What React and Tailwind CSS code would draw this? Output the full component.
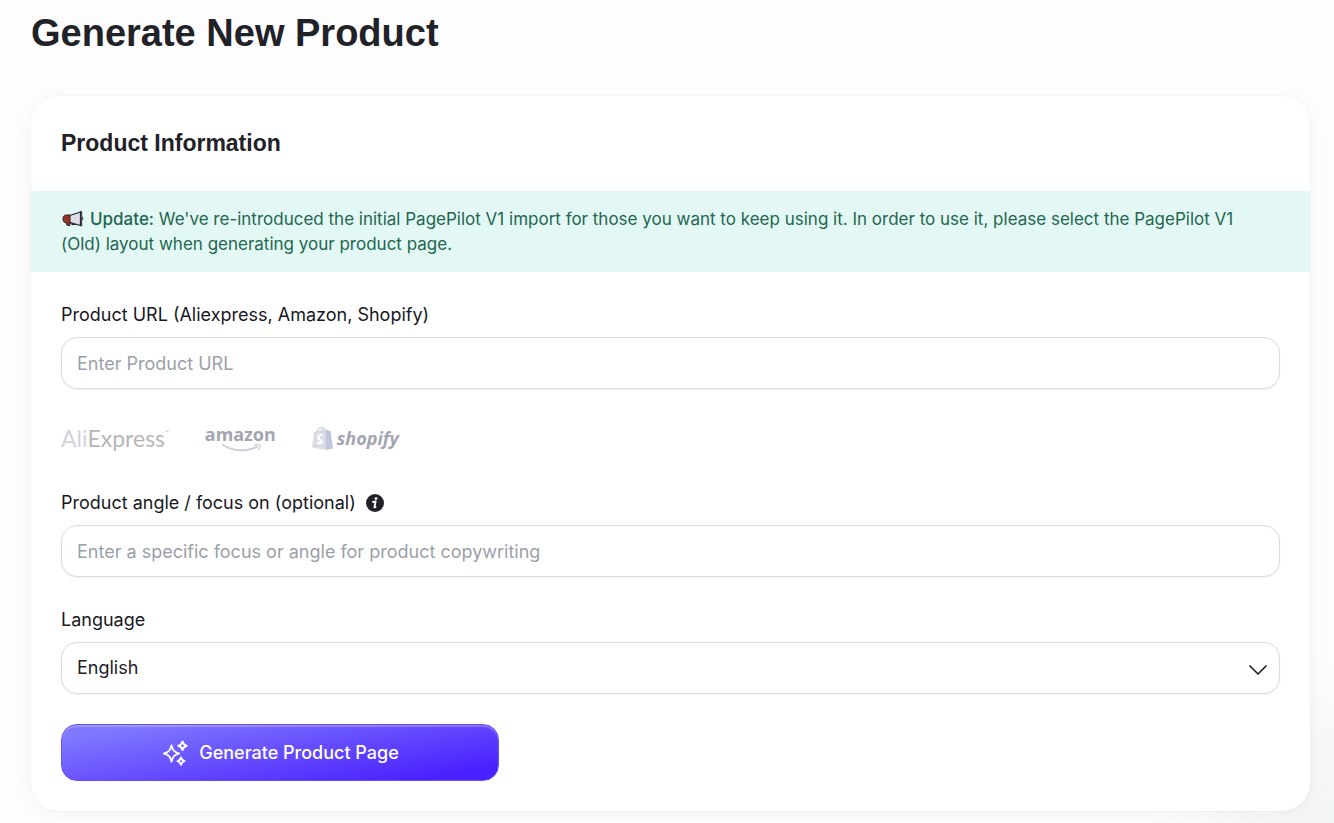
import { useState } from "react";

const fieldClass =
  "block w-full h-[52px] rounded-2xl border border-[#dadbdf] bg-white px-[15px] text-[18px] leading-6 text-[#212128] placeholder:text-[#9b9fa8] outline-none shadow-[0_1px_2px_rgba(0,0,0,0.06)] focus:border-[#6a5cff]";

const labelClass = "block text-[18px] leading-6 text-[#18181f]";

function MegaphoneIcon() {
  return (
    <svg width="23" height="18" viewBox="0 0 23 18" className="inline-block align-[-3px] mr-1.5" aria-hidden="true">
      <path d="M9.500 12.500c.5 2.600 4.500 2.800 5.500.5" fill="none" stroke="#28232d" strokeWidth="1.200" />
      <path d="M8.500 5.500 19.500 2v13.500L8.500 12.300Z" fill="#dcdde6" stroke="#28232d" strokeWidth="1.200" strokeLinejoin="round" />
      <path d="M5 5h4v7.500H8.300l.7 3H6.200L5 12.800c-2.200 0-3-1.800-3-3.900S2.800 5 5 5Z" fill="#8f3325" stroke="#3a2428" strokeWidth="1" strokeLinejoin="round" />
      <path d="M19.500 1.500h1.200v5.200c1.500.4 1.500 3.400 0 3.800V16h-1.200Z" fill="#514c5b" stroke="#28232d" strokeWidth=".8" />
    </svg>
  );
}

function InfoIcon() {
  return (
    <svg width="18" height="18" viewBox="0 0 18 18" aria-hidden="true">
      <circle cx="9" cy="9" r="9" fill="#212128" />
      <circle cx="10" cy="4.600" r="1.400" fill="#fff" />
      <path d="M7 8 9.700 7.400 8.400 13c-.1.700.5.600 1.200-.1" fill="none" stroke="#fff" strokeWidth="1.800" strokeLinecap="round" strokeLinejoin="round" />
    </svg>
  );
}

function SparklesIcon() {
  return (
    <svg width="28" height="28" viewBox="0 0 28 28" fill="none" stroke="#fff" strokeWidth="2" strokeLinejoin="round" aria-hidden="true">
      <path d="M10.500 6.500c1 4.800 2.700 6.700 7.500 8-4.800 1.300-6.500 3.200-7.500 8-1-4.800-2.700-6.700-7.500-8 4.800-1.300 6.500-3.200 7.500-8Z" />
      <path d="M21.500 2.500c.6 2.500 1.600 3.600 4.200 4.300-2.600.7-3.600 1.800-4.200 4.300-.6-2.500-1.600-3.600-4.200-4.300 2.600-.7 3.600-1.800 4.200-4.300Z" />
      <path d="M20 18.500c.5 2.100 1.300 3 3.500 3.600-2.200.6-3 1.500-3.500 3.600-.5-2.100-1.300-3-3.500-3.600 2.200-.6 3-1.500 3.500-3.600Z" />
    </svg>
  );
}

function AliExpressLogo() {
  return (
    <span className="flex items-start font-['Lato',sans-serif] text-[23px] leading-7 text-[#b8b5ba]">
      <span className="text-[#d3d3dc]">Ali</span>Express
      <span className="text-[5px] leading-4">™</span>
    </span>
  );
}

function AmazonLogo() {
  return (
    <span className="flex flex-col items-center">
      <span className="font-['Noto_Sans',sans-serif] text-[18px] leading-5 font-bold text-[#a3a5b1]">amazon</span>
      <svg width="44" height="8" viewBox="0 0 44 8" fill="none" stroke="#ccd0dc" aria-hidden="true">
        <path d="M5 1C15 7.500 29 8 39 2.500" strokeWidth="2" strokeLinecap="round" />
        <path d="M36.500 1c3-.8 5-.8 5.500 0 .4 1-.3 3-1.800 4.500" strokeWidth="1.300" strokeLinecap="round" />
      </svg>
    </span>
  );
}

function ShopifyLogo() {
  return (
    <span className="flex items-center gap-1">
      <svg width="21" height="24" viewBox="0 0 21 24" aria-hidden="true">
        <path d="M2 6 14 3.500V24L0 21.500Z" fill="#d9dce4" />
        <path d="M14 3.500 18.500 5 21 22.500 14 24Z" fill="#bfc5dc" />
        <path d="M5 6.500C5.500 3 8 .8 9.800 1c1.700.2 2.400 2.300 2.400 4.500M8.500 5.500C9 2.500 11.500.8 13 3.500" fill="none" stroke="#d0d4de" strokeWidth="1.200" />
        <path d="M11 9.500C8.500 8.500 6 9.200 6 11.300c0 2.300 3.700 2.200 3.700 4.400 0 2-2.600 2-4.700.6" fill="none" stroke="#fff" strokeWidth="2.200" />
      </svg>
      <span className="font-['Open_Sans',sans-serif] text-[18px] leading-6 font-bold italic text-[#a3a5b1]">shopify</span>
    </span>
  );
}

export default function App() {
  const [url, setUrl] = useState("");
  const [angle, setAngle] = useState("");
  const [language, setLanguage] = useState("English");

  return (
    <main className="min-h-screen bg-[#fdfdfd] bg-[radial-gradient(circle_at_bottom_right,#f1f5f3_0,#fdfdfd_180px)] pl-[31px] pr-6 pt-2.5 pb-3 font-['Inter',sans-serif] text-[#212128]">
      <h1 className="font-['Liberation_Sans',sans-serif] text-[38px] leading-[46px] font-bold">Generate New Product</h1>

      <section className="mt-10 overflow-hidden rounded-[28px] bg-white shadow-[0_0_0_1px_rgba(0,0,0,0.02),0_3px_20px_rgba(0,0,0,0.04)]">
        <h2 className="px-[30px] pt-8 pb-[33px] font-['Liberation_Sans',sans-serif] text-[23px] leading-[30px] font-bold">
          Product Information
        </h2>

        <div className="bg-[#e3f8f4] pl-[30px] pr-10 pt-4 pb-[15px] text-[17px] leading-[25px] text-[#226650]">
          <p>
            <MegaphoneIcon />
            <strong className="font-medium">Update:</strong> We've re-introduced the initial PagePilot V1 import for
            those you want to keep using it. In order to use it, please select the PagePilot V1 (Old) layout when
            generating your product page.
          </p>
        </div>

        <form className="px-[30px] pt-[31px] pb-[30px]" onSubmit={(e) => e.preventDefault()}>
          <div className="flex flex-col gap-2.5">
            <label htmlFor="product-url" className={labelClass}>
              Product URL (Aliexpress, Amazon, Shopify)
            </label>
            <input
              id="product-url"
              type="text"
              placeholder="Enter Product URL"
              value={url}
              onChange={(e) => setUrl(e.target.value)}
              className={fieldClass}
            />
          </div>

          {/* Supported stores */}
          <div className="flex h-[102px] items-center gap-9 pb-1">
            <AliExpressLogo />
            <AmazonLogo />
            <ShopifyLogo />
          </div>

          <div className="flex flex-col gap-2.5">
            <div className="flex items-center gap-2.5">
              <label htmlFor="product-angle" className={labelClass}>
                Product angle / focus on (optional)
              </label>
              <button type="button" aria-label="About product angle">
                <InfoIcon />
              </button>
            </div>
            <input
              id="product-angle"
              type="text"
              placeholder="Enter a specific focus or angle for product copywriting"
              value={angle}
              onChange={(e) => setAngle(e.target.value)}
              className={fieldClass}
            />
          </div>

          <div className="mt-[31px] flex flex-col gap-2.5">
            <label htmlFor="language" className={labelClass}>
              Language
            </label>
            <div className="relative">
              <select
                id="language"
                value={language}
                onChange={(e) => setLanguage(e.target.value)}
                className={`${fieldClass} appearance-none`}
              >
                <option>English</option>
              </select>
              <svg
                width="20"
                height="12"
                viewBox="0 0 20 12"
                fill="none"
                stroke="#212128"
                strokeWidth="1.700"
                strokeLinecap="round"
                strokeLinejoin="round"
                className="pointer-events-none absolute right-3 top-[22px]"
                aria-hidden="true"
              >
                <path d="M2 2l8 8 8-8" />
              </svg>
            </div>
          </div>

          <button
            type="submit"
            className="mt-[30px] flex h-[57px] w-full max-w-[438px] items-center justify-center gap-2.5 rounded-2xl border border-[#6450f5] bg-[linear-gradient(170deg,#8078ff_10%,#4a20ff_90%)] text-[18px] leading-6 font-medium text-white shadow-[inset_0_2px_1px_rgba(255,255,255,0.25)]"
          >
            <SparklesIcon />
            Generate Product Page
          </button>
        </form>
      </section>
    </main>
  );
}
